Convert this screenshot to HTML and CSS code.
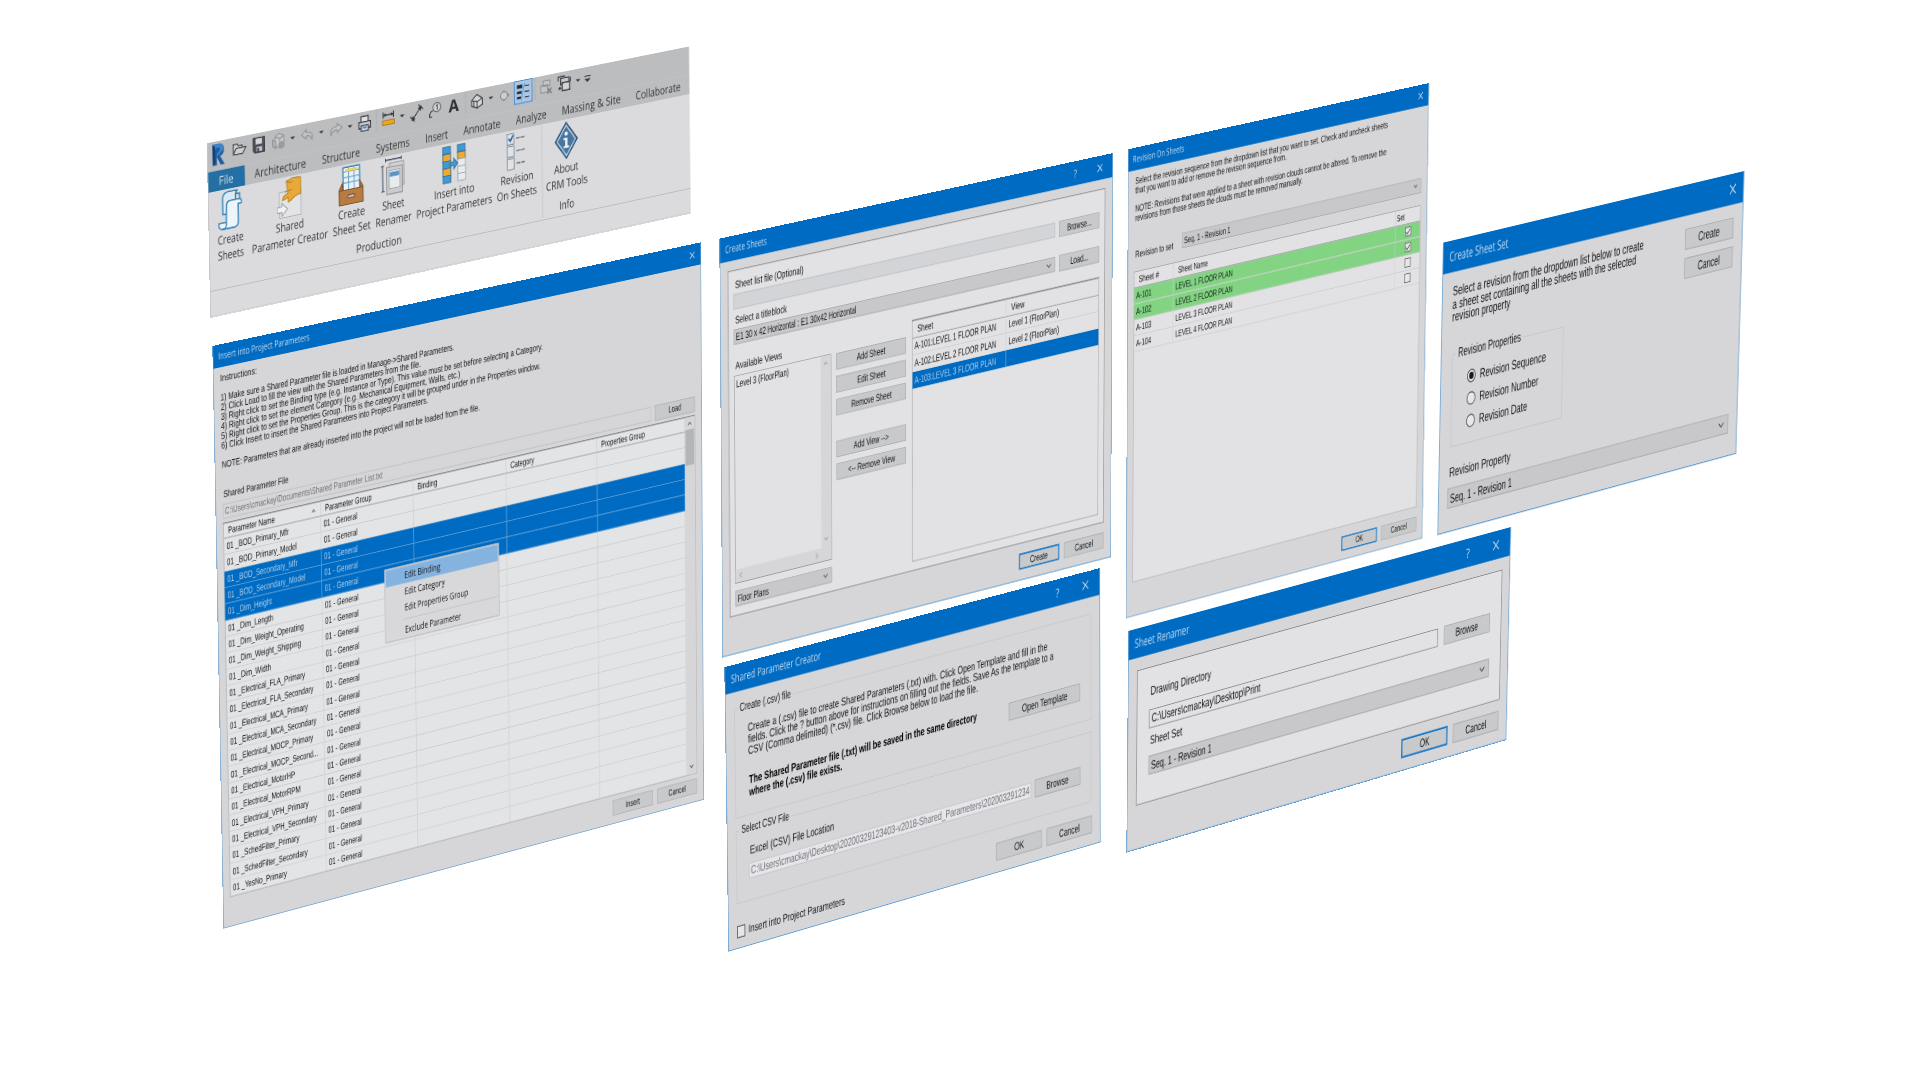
FILE: index.html
```html
<!DOCTYPE html>
<html lang="en">
<head>
<meta charset="utf-8">
<title>CRM Tools</title>
<link rel="stylesheet" href="styles.css">
</head>
<body>
<svg class="defs" width="0" height="0">
  <symbol id="x" viewBox="0 0 10 10"><path d="M.7.7l8.6 8.6M9.3.7L.7 9.3" fill="none" stroke="currentColor" stroke-width="1.1"/></symbol>
  <symbol id="down" viewBox="0 0 9 6"><path d="M.8.8l3.7 3.9L8.200.8" fill="none" stroke="currentColor" stroke-width="1.3"/></symbol>
  <symbol id="dd" viewBox="0 0 6 4"><path d="M0 .5h6L3 3.600z" fill="#3a3a3c"/></symbol>
</svg>

<main class="stage">

<section class="plane ribbon" data-quad="206.7,143.3,689,46.5,690.7,213.3,210.3,317.7">
  <div class="qat">
    <i class="logo"><svg width="18" height="25" viewBox="0 0 18 25"><path d="M2 1h8q6 0 6 6.500t-5 7l5.500 9.500h-5L7 15v9H2z" fill="#1d5c9e"/><path d="M2 1h8q6 0 6 6.500L7 15v-3l4-4q0-3-2-3H7L2 9z" fill="#3f86c6"/><path d="M2 1l3 3v17l-3 3z" fill="#123f74"/></svg></i>
    <i><svg width="18" height="14" viewBox="0 0 18 14"><path d="M1.500 12V1.500h4.500l1.500 2h5V6M1.500 12l3.500-6h12l-4 6.500H1.500z" fill="#cfd0d2" stroke="#3f4146" stroke-width="1.200"/></svg></i>
    <i><svg width="16" height="18" viewBox="0 0 16 18"><path d="M1 1h14v16H3l-2-2z" fill="#4a4f5a" stroke="#30343c"/><path d="M4 2h8v6H4z" fill="#d4d5d8"/><path d="M5 11h7v5H5z" fill="#c4c6ca"/><path d="M6 12h2v4H6z" fill="#30343c"/></svg></i>
    <i><svg width="17" height="19" viewBox="0 0 17 19"><path d="M4 4l5-3 6 3v9l-5 4-6-3zM4 4l6 3 5-3M10 7v10" fill="#c9cacb" stroke="#8e9092"/><path d="M1 7l4 2v8l-4-3z" fill="#b0b1b3" stroke="#8e9092"/><circle cx="12" cy="14" r="4" fill="#9a9c9e"/></svg></i>
    <b><svg width="6" height="4"><use href="#dd"/></svg></b>
    <i><svg width="17" height="14" viewBox="0 0 17 14"><path d="M7 1L1 6l6 5V8q6-1 7 5 3-9-7-9z" fill="#c3c4c5" stroke="#8b8d90"/></svg></i>
    <b><svg width="6" height="4"><use href="#dd"/></svg></b>
    <i><svg width="17" height="14" viewBox="0 0 17 14"><path d="M10 1l6 5-6 5V8q-6-1-8 5-2-9 8-9z" fill="#c3c4c5" stroke="#8b8d90"/></svg></i>
    <b><svg width="6" height="4"><use href="#dd"/></svg></b>
    <i><svg width="17" height="18" viewBox="0 0 17 18"><path d="M4 7V1h9v6" fill="#dfe0e2" stroke="#35383d" stroke-width="1.300"/><path d="M1 7h15v7H1z" fill="#c6c8cb" stroke="#35383d" stroke-width="1.300"/><path d="M4 11h9v6H4z" fill="#e6e6e8" stroke="#35383d" stroke-width="1.300"/><path d="M6 12.500h5v2H6z" fill="#3b80bd"/></svg></i>
    <u></u>
    <i><svg width="17" height="16" viewBox="0 0 17 16"><path d="M2 3.500h13M2 0v7M15 0v7" stroke="#35383d" stroke-width="1.300"/><path d="M2 3.500l3-2v4zM15 3.500l-3-2v4z" fill="#35383d"/><path d="M1 9.500h15v5H1z" fill="#e9a921" stroke="#a8781a"/></svg></i>
    <b><svg width="6" height="4"><use href="#dd"/></svg></b>
    <i><svg width="17" height="19" viewBox="0 0 17 19"><path d="M3 16L14 3M0 12l6 6M11 0l6 6" stroke="#35383d" stroke-width="1.200"/><path d="M2 17l1-5.500 4 4zM15 2l-1 5.500-4-4z" fill="#35383d"/></svg></i>
    <i><svg width="16" height="17" viewBox="0 0 16 17"><circle cx="10.500" cy="6" r="5" fill="#d2d3d5" stroke="#55585c" stroke-width="1.100"/><path d="M9.500 4.500l1.300-1v5.500M1 15q0-5 4.500-6M1 12v4h3" fill="none" stroke="#35383d" stroke-width="1.100"/></svg></i>
    <i class="glyph-a">A</i>
    <u></u>
    <i><svg width="16" height="17" viewBox="0 0 16 17"><path d="M1 7l7-6 7 5v7l-7 3-7-3z" fill="#d6d7d9" stroke="#44474c" stroke-width="1.300"/><path d="M1 7l7 2 7-3M8 9v7M4 8v7" fill="none" stroke="#44474c" stroke-width="1.300"/></svg></i>
    <b><svg width="6" height="4"><use href="#dd"/></svg></b>
    <i><svg width="14" height="15" viewBox="0 0 14 15"><path d="M5 1l8 6.500-8 6.500z" fill="#808285"/><circle cx="6" cy="7.500" r="4.500" fill="#cdced0" stroke="#85878a" stroke-width="1.200"/></svg></i>
    <i class="thin"><svg width="18" height="19" viewBox="0 0 18 19"><path d="M1 1h7v4H1zM1 8h6v3H1zM1 14h5v2.500H1z" fill="#22262c"/><path d="M11 3h6M11 9.500h6M11 15.500h6" stroke="#3b4046" stroke-width="1.200"/><path d="M11 0L6 19" stroke="#4e94da" stroke-width="1"/></svg></i>
    <u></u>
    <i><svg width="17" height="17" viewBox="0 0 17 17"><path d="M4 1h9v6H4zM1 6h9v8H1z" fill="#c3c4c6" stroke="#8d8f92" stroke-width="1.100"/><path d="M10 10l5 6M15 10l-5 6" stroke="#77797c" stroke-width="1.500"/></svg></i>
    <i><svg width="18" height="19" viewBox="0 0 18 19"><path d="M1 6V1h9M17 3v5" fill="none" stroke="#35383d" stroke-width="1.300"/><path d="M4 3h11v7H4z" fill="#c6c7c9" stroke="#35383d" stroke-width="1.300"/><path d="M6 8h10v9H6z" fill="#d4d5d7" stroke="#35383d" stroke-width="1.400"/><path d="M1 14h4M3 12v4" stroke="#35383d" stroke-width="1.300"/></svg></i>
    <b><svg width="6" height="4"><use href="#dd"/></svg></b>
    <b><svg width="9" height="9" viewBox="0 0 9 9"><path d="M0 1h9" stroke="#3a3a3c" stroke-width="1.200"/><path d="M.5 4h8l-4 4z" fill="#3a3a3c"/></svg></b>
  </div>
  <nav class="tabs">
    <span class="file"><span data-w="18">File</span></span><span data-w="64">Architecture</span><span data-w="48">Structure</span><span data-w="43">Systems</span><span data-w="29">Insert</span><span data-w="48">Annotate</span><span data-w="40">Analyze</span><span data-w="78">Massing &amp; Site</span><span data-w="60">Collaborate</span>
  </nav>
  <div class="panels">
    <div class="panel">
      <div class="tools">
        <div class="tool t1"><svg width="30" height="43" viewBox="0 0 30 43"><path d="M8 3q1-2 4-2h13q-3 1-3 4v20H6V8q0-3 2-5z" fill="#dbeaf4" stroke="#2d7fb5" stroke-width="1.500"/><path d="M11 14q1-3 4-3h12q3 1 2 5h-4v18q0 7-5 7H5q-5-1-4-7h9z" fill="#eef5fa" stroke="#2d7fb5" stroke-width="1.500"/><path d="M10 34q1 6-4 7M22 5h5v6" fill="none" stroke="#2d7fb5" stroke-width="1.500"/></svg><span data-w="32">Create</span><span data-w="32">Sheets</span></div>
        <div class="tool t2"><svg width="31" height="43" viewBox="0 0 31 43"><path d="M3 14h27v28H3z" fill="#e3e4e6" stroke="#aeb0b3"/><path d="M12 3l9-3 9 1v18l-8 2-5 4-3 1v-5l-7 2 1-4 6-3z" fill="#e6a93a" stroke="#b47c1e"/><path d="M12 3q5 3 8 1M10 14l9-1" stroke="#b47c1e" fill="none"/><path d="M0 30h6v-4l7 7-7 7v-4H0z" fill="#f2f2f4" stroke="#9a9c9f"/></svg><span data-w="35">Shared</span><span data-w="95">Parameter Creator</span></div>
        <div class="tool t3"><svg width="32" height="43" viewBox="0 0 32 43"><path d="M6 1h21v28H6z" fill="#e9f2f8" stroke="#2f78ab" stroke-width="1.400"/><path d="M6 6h21M6 12h21M6 18h21M13 1v26M20 1v26" stroke="#6ba3c9" stroke-width="1.200"/><path d="M9 3h15v3H9z" fill="#f0d060"/><path d="M5 18L1 25v17h30V25l-4-7v9H5z" fill="#a8713c" stroke="#7c4f24"/><path d="M1 26h30v16H1z" fill="#b67c43" stroke="#7c4f24"/><path d="M12 32h8v3h-8z" fill="#e1e1e1" stroke="#6f4520"/></svg><span data-w="34">Create</span><span data-w="48">Sheet Set</span></div>
        <div class="tool t4"><svg width="31" height="42" viewBox="0 0 31 42"><path d="M6 2h20M6 0v4M26 0v4M2 8v28M0 8h4M0 36h4" stroke="#3d4f66" stroke-width="1.200"/><path d="M11 6h18v26H11z" fill="#d5d7d9" stroke="#8c9094"/><path d="M7 10h20v30H7z" fill="#c9cbce" stroke="#8c9094"/><path d="M10 14h14v20H10z" fill="#e9eaec" stroke="#a4a7aa"/><path d="M11 16h12v5H11z" fill="#5a93c2"/></svg><span data-w="28">Sheet</span><span data-w="46">Renamer</span></div>
        <div class="tool t5"><svg width="31" height="42" viewBox="0 0 31 42"><g stroke="#3f6f93" stroke-width="1"><path d="M1 1h10v8H1zM1 17h10v8H1zM1 33h10v8H1zM20 1h10v8H20z" fill="#3f9ad6"/><path d="M1 9h10v8H1zM1 25h10v8H1zM20 9h10v8H20z" fill="#eeab2d"/><path d="M20 17h10v8H20zM20 25h10v8H20zM20 33h10v8H20z" fill="#e8ecef" stroke="#9aa4ac"/><path d="M10 19h5v-4l5 6-5 6v-4h-5z" fill="#3f9ad6"/></g></svg><span data-w="52">Insert into</span><span data-w="98">Project Parameters</span></div>
        <div class="tool t6"><svg width="26" height="42" viewBox="0 0 26 42"><g fill="#dfe3e8" stroke="#7d8791"><path d="M1 1h9v12H1zM1 15h9v12H1zM1 29h9v12H1z"/></g><path d="M3 6l2.500 3L9 3" fill="none" stroke="#2b6cab" stroke-width="2"/><path d="M13 7h12M13 21h12M13 35h12" stroke="#6d747b" stroke-width="1.500" stroke-dasharray="5 1"/></svg><span data-w="43">Revision</span><span data-w="52">On Sheets</span></div>
      </div>
      <div class="caption"><span data-w="58">Production</span></div>
    </div>
    <div class="panel">
      <div class="tools">
        <div class="tool t7"><svg width="31" height="42" viewBox="0 0 31 42"><path d="M15.500 1L30 21 15.500 41 1 21z" fill="#48769f" stroke="#2d567c" stroke-width="1.500"/><path d="M15.500 4L27.500 21l-12 17-12-17z" fill="none" stroke="#cfd9e2" stroke-width="1.300"/><circle cx="15.500" cy="13.500" r="2.300" fill="#f1f3f5"/><path d="M12 18h5v9h2v2.500h-7V27h2v-6.500h-2z" fill="#f1f3f5"/></svg><span data-w="32">About</span><span data-w="55">CRM Tools</span></div>
      </div>
      <div class="caption"><span data-w="20">Info</span></div>
    </div>
  </div>
  <div class="under"></div>
</section>

<section class="plane dialog insert" data-quad="212.3,346,701,242.3,704,799.7,223.3,928.7">
  <header><span data-w="166">Insert into Project Parameters</span><svg class="close" width="11" height="11"><use href="#x"/></svg></header>
  <div class="body">
    <div class="para">
      <p data-w="66">Instructions:</p><br>
      <p data-w="430">1) Make sure a Shared Parameter file is loaded in Manage-&gt;Shared Parameters.</p>
      <p data-w="367">2) Click Load to fill the view with the Shared Parameters from the file.</p>
      <p data-w="598">3) Right click to set the Binding type (e.g. Instance or Type). This value must be set before selecting a Category.</p>
      <p data-w="441">4) Right click to set the element Category (e.g. Mechanical Equipment, Walls, etc.)</p>
      <p data-w="593">5) Right click to set the Properties Group. This is the category it will be grouped under in the Properties window.</p>
      <p data-w="380">6) Click Insert to insert the Shared Parameters into Project Parameters.</p><br>
      <p data-w="477">NOTE: Parameters that are already inserted into the project will not be loaded from the file.</p>
    </div>
    <div class="lbl"><span data-w="118">Shared Parameter File</span></div>
    <div class="filerow"><div class="field"><span data-w="289">C:\Users\cmackay\Documents\Shared Parameter List.txt</span></div><button><span>Load</span></button></div>
    <div class="listwrap">
      <div class="grid" id="params"></div>
      <div class="vbar"><svg width="9" height="6" class="flip"><use href="#down"/></svg><div class="thumb"></div><svg width="9" height="6"><use href="#down"/></svg></div>
    </div>
    <div class="actions"><button><span>Insert</span></button><button><span>Cancel</span></button></div>
  </div>
  <div class="menu"><div class="on"><span data-w="68">Edit Binding</span></div><div><span data-w="76">Edit Category</span></div><div><span data-w="120">Edit Properties Group</span></div><hr><div><span data-w="106">Exclude Parameter</span></div></div>
</section>

<section class="plane dialog sheets" data-quad="719.3,238.7,1113,153,1110.7,557,722.3,657.3">
  <header><span data-w="74">Create Sheets</span><em>?</em><svg class="close" width="11" height="11"><use href="#x"/></svg></header>
  <div class="body">
    <div class="box">
      <div class="lbl"><span data-w="122">Sheet list file (Optional)</span></div>
      <div class="filerow"><div class="field"></div><button><span>Browse...</span></button></div>
      <div class="lbl l2"><span data-w="92">Select a titleblock</span></div>
      <div class="filerow"><div class="combo"><span data-w="216">E1 30 x 42 Horizontal : E1 30x42 Horizontal</span><svg width="9" height="6"><use href="#down"/></svg></div><button><span>Load...</span></button></div>
      <div class="cols">
        <div class="views">
          <div class="lbl"><span data-w="83">Available Views</span></div>
          <div class="listbox">
            <div class="items"><span data-w="94">Level 3 (FloorPlan)</span></div>
            <div class="vs"><svg width="8" height="5" class="flip"><use href="#down"/></svg><svg width="8" height="5"><use href="#down"/></svg></div>
            <div class="hs"><svg width="8" height="5" class="left"><use href="#down"/></svg><svg width="8" height="5" class="right"><use href="#down"/></svg></div>
          </div>
          <div class="combo"><span data-w="56">Floor Plans</span><svg width="9" height="6"><use href="#down"/></svg></div>
        </div>
        <div class="btns"><button><span>Add Sheet</span></button><button><span>Edit Sheet</span></button><button><span>Remove Sheet</span></button><button class="sp"><span>Add View --&gt;</span></button><button><span>&lt;-- Remove View</span></button></div>
        <div class="tbl">
          <div class="r h"><span><span data-w="29">Sheet</span></span><span><span data-w="25">View</span></span></div>
          <div class="r"><span><span data-w="151">A-101:LEVEL 1 FLOOR PLAN</span></span><span><span data-w="95">Level 1 (FloorPlan)</span></span></div>
          <div class="r"><span><span data-w="151">A-102:LEVEL 2 FLOOR PLAN</span></span><span><span data-w="95">Level 2 (FloorPlan)</span></span></div>
          <div class="r sel"><span><span data-w="151">A-103:LEVEL 3 FLOOR PLAN</span></span><span></span></div>
        </div>
      </div>
    </div>
    <div class="actions"><button class="def"><span>Create</span></button><button><span>Cancel</span></button></div>
  </div>
</section>

<section class="plane dialog creator" data-quad="724.3,667.3,1100,568,1100.7,842.3,728.3,951.7">
  <header><span data-w="141">Shared Parameter Creator</span><em>?</em><svg class="close" width="11" height="11"><use href="#x"/></svg></header>
  <div class="body">
    <fieldset class="g1"><legend><span data-w="80">Create (.csv) file</span></legend>
      <div class="para">
        <p data-w="483">Create a (.csv) file to create Shared Parameters (.txt) with. Click Open Template and fill in the</p>
        <p data-w="493">fields. Click the ? button above for instructions on filling out the fields. Save As the template to a</p>
        <p data-w="368">CSV (Comma delimited) (*.csv) file. Click Browse below to load the file.</p>
      </div>
      <div class="split">
        <div class="para strong"><p data-w="365">The Shared Parameter file (.txt) will be saved in the same directory</p><p data-w="147">where the (.csv) file exists.</p></div>
        <button><span>Open Template</span></button>
      </div>
    </fieldset>
    <fieldset class="g2"><legend><span data-w="75">Select CSV File</span></legend>
      <div class="lbl"><span data-w="133">Excel (CSV) File Location</span></div>
      <div class="filerow"><div class="field"><span data-w="450">C:\Users\cmackay\Desktop\20200329123403-v2018-Shared_Parameters\202003291234</span></div><button><span>Browse</span></button></div>
    </fieldset>
    <div class="foot"><label><i class="chk"></i><span data-w="153">Insert into Project Parameters</span></label><button><span>OK</span></button><button><span>Cancel</span></button></div>
  </div>
</section>

<section class="plane dialog revision" data-quad="1128,149.3,1429,83,1422.3,538.3,1125.7,618.3">
  <header><span data-w="104">Revision On Sheets</span><svg class="close" width="11" height="11"><use href="#x"/></svg></header>
  <div class="body">
    <div class="para">
      <p data-w="523">Select the revision sequence from the dropdown list that you want to set. Check and uncheck sheets</p>
      <p data-w="310">that you want to add or remove the revision sequence from.</p><br>
      <p data-w="521">NOTE: Revisions that were applied to a sheet with revision clouds cannot be altered. To remove the</p>
      <p data-w="344">revisions from those sheets the clouds must be removed manually.</p>
    </div>
    <div class="pick"><span class="w"><span data-w="77">Revision to set</span></span><div class="combo"><span data-w="95">Seq. 1 - Revision 1</span><svg width="9" height="6"><use href="#down"/></svg></div></div>
    <div class="tbl">
      <div class="r h"><span><span data-w="41">Sheet #</span></span><span><span data-w="61">Sheet Name</span></span><span><span data-w="17">Set</span></span></div>
      <div class="r ok"><span><span data-w="31">A-101</span></span><span><span data-w="117">LEVEL 1 FLOOR PLAN</span></span><span><i class="chk on"></i></span></div>
      <div class="r ok"><span><span data-w="31">A-102</span></span><span><span data-w="117">LEVEL 2 FLOOR PLAN</span></span><span><i class="chk on"></i></span></div>
      <div class="r"><span><span data-w="31">A-103</span></span><span><span data-w="117">LEVEL 3 FLOOR PLAN</span></span><span><i class="chk"></i></span></div>
      <div class="r"><span><span data-w="31">A-104</span></span><span><span data-w="117">LEVEL 4 FLOOR PLAN</span></span><span><i class="chk"></i></span></div>
    </div>
    <div class="actions"><button class="def"><span>OK</span></button><button><span>Cancel</span></button></div>
  </div>
</section>

<section class="plane dialog set" data-quad="1443,242.7,1744.3,171,1736,453.7,1437.3,535">
  <header><span data-w="88">Create Sheet Set</span><svg class="close" width="11" height="11"><use href="#x"/></svg></header>
  <div class="body">
    <div class="top">
      <div class="para">
        <p data-w="290">Select a revision from the dropdown list below to create</p>
        <p data-w="279">a sheet set containing all the sheets with the selected</p>
        <p data-w="87">revision property</p>
      </div>
      <div class="stack"><button><span>Create</span></button><button><span>Cancel</span></button></div>
    </div>
    <fieldset><legend><span data-w="94">Revision Properties</span></legend>
      <label><i class="rad on"></i><span data-w="100">Revision Sequence</span></label>
      <label><i class="rad"></i><span data-w="89">Revision Number</span></label>
      <label><i class="rad"></i><span data-w="73">Revision Date</span></label>
    </fieldset>
    <div class="lbl"><span data-w="92">Revision Property</span></div>
    <div class="combo"><span data-w="93">Seq. 1 - Revision 1</span><svg width="9" height="6"><use href="#down"/></svg></div>
  </div>
</section>

<section class="plane dialog renamer" data-quad="1128.3,631,1511,527,1506.3,740,1126.3,852.7">
  <header><span data-w="84">Sheet Renamer</span><em>?</em><svg class="close" width="11" height="11"><use href="#x"/></svg></header>
  <div class="body">
    <div class="box">
      <div class="lbl"><span data-w="94">Drawing Directory</span></div>
      <div class="filerow"><div class="field"><span data-w="170">C:\Users\cmackay\Desktop\Print</span></div><button><span>Browse</span></button></div>
      <div class="lbl l2"><span data-w="50">Sheet Set</span></div>
      <div class="combo"><span data-w="94">Seq. 1 - Revision 1</span><svg width="9" height="6"><use href="#down"/></svg></div>
    </div>
    <div class="actions"><button class="def"><span>OK</span></button><button><span>Cancel</span></button></div>
  </div>
</section>

</main>
<script src="planes.js"></script>
</body>
</html>
```
FILE: styles.css
```css
* { box-sizing: border-box; }
body { margin: 0; background: #fff; }
.defs { position: absolute; }
.stage { position: relative; width: 1920px; height: 1080px; overflow: hidden; }
p { margin: 0; }
[data-w] { display: inline-block; white-space: nowrap; transform-origin: 0 50%; }

/* Windows hang in space; planes.js gives each its perspective */
.tilt { position: absolute; left: 0; top: 0; transform-origin: 0 0; }
.plane { position: relative; transform-origin: 0 0; display: flex; flex-direction: column; overflow: hidden; }

/* Ribbon */
.ribbon { width: 620px; height: 190px; background: #dbdbdd; color: #333437; font: 13px/17px "Open Sans", "Noto Sans", sans-serif; border-left: 1px solid #c4c5c6; border-bottom: 1px solid #c4c5c6; }
.qat { display: flex; height: 32px; background: #bcbdbe; margin-left: -1px; align-items: flex-start; }
.qat > * { display: flex; align-items: center; justify-content: center; height: 26px; flex: none; }
.qat > i { width: 24px; }
.qat > i.logo { width: 28px; height: 28px; justify-content: flex-start; padding-left: 5px; }
.qat > b { width: 12px; }
.qat > u { width: 6px; }
.qat > u::after { content: ""; width: 1px; height: 24px; background: #adaeaf; }
.qat > .thin { border: 1.500px solid #3f86cd; background: #a9c6e4; }
.glyph-a { font: bold 19px/26px "Open Sans", sans-serif; color: #2e3034; }
.tabs { display: flex; height: 22px; background: #bcbdbe; gap: 20px; line-height: 22px; margin-left: -1px; }
.file { width: 46px; margin-right: -8px; background: #2470a5; color: #d8e4ee; text-align: center; }
.panels { display: flex; height: 108px; border-bottom: 1px solid #b9babb; }
.panel { display: flex; flex-direction: column; border-right: 1px solid #c6c7c8; margin: 2px 0; }
.panel:last-child { border: 0; }
.tools { display: flex; padding-left: 3px; height: 84px; }
.panel:last-child .tools { padding: 0; }
.tool { display: flex; flex-direction: column; align-items: center; white-space: nowrap; }
.tool svg { height: 43px; margin-bottom: 1px; flex: none; }
.t1 { width: 46px; } .t2 { width: 101px; } .t3 { width: 54px; } .t4 { width: 52px; } .t5 { width: 104px; } .t6 { width: 62px; padding-right: 4px; } .t7 { width: 62px; }
.caption { text-align: center; padding-top: 1px; }

/* Dialogs */
.dialog { background: #d6d6d8; color: #161618; font: 13px/13px "Liberation Sans", Arial, sans-serif; border: 1px solid #5c9dd3; border-top: 0; }
.dialog header { display: flex; align-items: center; flex: none; height: 31px; margin: 0 -1px; padding: 0 12px 0 10px; background: #006bc2; color: #cfe0f1; font: 13px/31px "Open Sans", "Noto Sans", sans-serif; }
.dialog header em { font-style: normal; font-size: 14px; margin-left: auto; margin-right: 38px; }
.dialog header .close { margin-left: auto; }
.dialog header em + .close { margin-left: 0; margin-right: 7px; }
.body { display: flex; flex-direction: column; flex: 1; }
.para { white-space: nowrap; }
.para p { display: block; width: max-content; }
.lbl { height: 14px; line-height: 14px; white-space: nowrap; }
button { font: inherit; color: inherit; padding: 0; margin: 0; height: 21px; width: 76px; flex: none; border: 1px solid #acadaf; background: #c8c9cb; border-radius: 0; line-height: 18px; white-space: nowrap; }
button span, .narrow { display: inline-block; transform: scaleX(.86); }
.narrow { transform-origin: 0 50%; }
button.def { border: 2px solid #1d7ac8; line-height: 16px; }
.field, .combo { display: flex; align-items: center; border: 1px solid #bfc0c2; padding: 0 3px; white-space: nowrap; }
.combo { background: #c8c8ca; border-color: #acadaf; height: 20px; padding-right: 6px; }
.combo svg { margin-left: auto; color: #55575a; flex: none; }
.filerow { display: flex; align-items: center; justify-content: space-between; }
.actions { display: flex; justify-content: flex-end; gap: 9px; }
.flip { transform: scaleY(-1); } .left { transform: rotate(90deg); } .right { transform: rotate(-90deg); }
.box { background: #e2e2e4; border: 1.500px solid #858688; }
.chk { display: block; width: 13px; height: 13px; border: 1.200px solid #3c3c3e; background: #e6e6e8; flex: none; }
.chk.on::after { content: ""; display: block; width: 8px; height: 4px; border: solid #2b2b2d; border-width: 0 0 1.500px 1.500px; transform: translate(1px, 2px) rotate(-48deg); }
.rad { width: 13px; height: 13px; border-radius: 50%; border: 1.200px solid #444547; background: #e8e8ea; flex: none; display: flex; align-items: center; justify-content: center; }
.rad.on::after { content: ""; width: 7px; height: 7px; border-radius: 50%; background: #1a1a1a; }
fieldset { margin: 0; min-width: 0; border: 1px solid #c6c7c9; padding: 0; }
legend { padding: 0 3px; height: 14px; line-height: 14px; margin-left: 5px; white-space: nowrap; }

/* Insert into Project Parameters */
.insert { width: 920px; height: 796px; }
.insert .body { padding: 8px 13px 0 12px; }
.insert .lbl { margin: 27px 0 4px 2px; }
.insert .filerow { height: 23px; }
.insert .field { width: 807px; height: 20px; color: #6c6d70; }
.insert .filerow button, .insert .actions button { width: 79px; height: 22px; }
.listwrap { display: flex; height: 514px; margin-top: 4px; border: 1px solid #9fa0a4; border-top: 2px solid #8c8d92; background: #e3e4e6; }
.grid { flex: 1; display: grid; grid-template-columns: 177px 172px 176px 175px 1fr; grid-template-rows: 20px repeat(22, 1fr); }
.grid > span { display: flex; align-items: center; padding: 0 0 0 5px; white-space: nowrap; border-right: 1px solid #cbccce; border-bottom: 1px solid #cbccce; min-height: 0; min-width: 0; }
.grid > span.h { padding: 0 8px; border-bottom-color: #9a9b9e; justify-content: space-between; }
.grid > span.s { background: #006bc2; color: #b9d3ec; border-color: #8bb9e2; }
.vbar { width: 19px; background: #d6d6d8; display: flex; flex-direction: column; align-items: center; padding: 6px 0 8px; color: #4c4d50; }
.vbar .thumb { width: 17px; height: 51px; margin: 5px 0 auto; background: #b4b5b7; }
.insert .actions { margin-top: 7px; }
.menu { position: absolute; left: 306px; top: 357px; width: 216px; height: 102px; background: #d8d8da; border: 1px solid #b4b5b8; padding: 1px; font: 13px/22px "Open Sans", "Noto Sans", sans-serif; white-space: nowrap; }
.menu div { padding-left: 35px; height: 22px; }
.menu .on { background: #84b3df; height: 23px; line-height: 23px; }
.menu hr { border: 0; height: 1px; background: #c2c3c5; margin: 5px 1px 3px 32px; }

/* Create Sheets */
.sheets { width: 720px; height: 526px; }
.sheets .body { padding: 12px 13px 0; }
.sheets .box { height: 435px; padding: 11px 10px 0 9px; }
.sheets .lbl { padding-left: 3px; }
.sheets .filerow { height: 21px; margin-top: 3px; }
.sheets .l2 { margin-top: 6px; }
.sheets .filerow .field, .sheets .filerow .combo { width: 587px; height: 19px; }
.sheets .filerow .field { background: #d3d4d7; }
.cols { display: flex; margin-top: 19px; align-items: flex-start; }
.views { width: 174px; margin-right: 9px; }
.listbox { height: 262px; margin: 5px 0 9px; border: 1px solid #98999c; display: grid; grid-template: 1fr 17px / 1fr 18px; }
.items { padding: 3px; white-space: nowrap; }
.vs, .hs { display: flex; justify-content: space-between; align-items: center; background: #d6d6d8; color: #96979a; }
.vs { flex-direction: column; padding: 7px 0 8px; }
.hs { grid-column: 1 / 3; padding: 0 22px 0 5px; }
.btns { display: flex; flex-direction: column; gap: 8px; margin: 20px 11px 0 0; }
.btns button { width: 127px; }
.btns .sp { margin-top: 24px; }
.sheets .tbl { flex: 1; height: 310px; border: 1px solid #a9aaae; border-top: 2px solid #8c8d92; }
.r { display: grid; white-space: nowrap; }
.r > span { display: flex; align-items: center; border-right: 1px solid #cfd0d2; border-bottom: 1px solid #cfd0d2; padding-left: 4px; min-width: 0; }
.sheets .r { grid-template-columns: 174px 1fr; height: 21.500px; }
.sheets .r > span:last-child { border-right: 0; }
.r.h > span { padding-left: 9px; border-bottom-color: #9a9b9e; }
.sheets .r.sel { background: #006bc2; color: #b9d3ec; }
.sheets .r.sel > span { border-bottom: 0; border-color: #8bb9e2; }
.sheets .actions { margin-top: 13px; padding-right: 0; }

/* Shared Parameter Creator */
.creator { width: 606px; height: 322px; }
.creator .body { padding: 12px 14px 0 13px; }
.g1 { height: 131px; }
.g1 .para { margin: 11px 0 0 20px; }
.split { display: flex; justify-content: space-between; align-items: flex-start; padding: 20px 18px 0 0; }
.split .para { margin: 0 0 0 21px; line-height: 14px; font-weight: bold; color: #000; }
.split button { width: 119px; margin: 1px 0 0 -60px; }
.g2 { height: 90px; margin-top: 7px; }
.g2 .lbl { margin: 12px 0 5px 21px; }
.g2 .filerow { padding: 0 18px 0 19px; }
.g2 .field { width: 456px; height: 18px; background: #e6e6ea; color: #6c6d70; padding: 0 2px; }
.foot { display: flex; gap: 8px; margin-top: 16px; }
.foot label { display: flex; gap: 5px; align-items: center; margin-right: auto; height: 29px; padding-top: 2px; white-space: nowrap; }
.foot .chk { height: 14px; }

/* Revision On Sheets */
.revision { width: 625px; height: 650px; }
.revision .body { padding: 9px 13px 0 12px; }
.revision .para { line-height: 12.700px; padding-left: 2px; }
.pick { display: flex; align-items: flex-end; justify-content: space-between; margin-top: 28px; }
.pick .w { padding-left: 3px; }
.pick .combo { width: 500px; height: 21px; }
.revision .tbl { height: 432px; margin-top: 17px; border: 1px solid #a9aaae; background: #e2e2e4; }
.revision .r { grid-template-columns: 80px 464px 1fr; height: 22px; }
.revision .r > span:last-child { border-right: 0; justify-content: center; padding: 0; }
.revision .r.h > span:last-child { justify-content: flex-start; padding-left: 2px; border-left: 0; }
.revision .r.ok { background: #82d483; }
.revision .actions { margin-top: 14px; }

/* Create Sheet Set */
.set { width: 462px; height: 285px; }
.set .body { padding: 13px 13px 0; }
.top { display: flex; justify-content: space-between; align-items: flex-start; height: 60px; }
.top .para { padding-left: 2px; line-height: 12.700px; }
.stack { display: flex; flex-direction: column; gap: 8px; padding-right: 1px; }
.set fieldset { width: 168px; height: 98px; margin-left: 3px; }
.set fieldset label { display: flex; align-items: center; gap: 6px; height: 22px; padding-left: 22px; white-space: nowrap; }
.set fieldset legend + label { margin-top: 7px; }
.set .body > .lbl { margin: 18px 0 8px 2px; }

/* Sheet Renamer */
.renamer { width: 611px; height: 234px; }
.renamer .body { padding: 13px 12px 0 13px; }
.renamer .box { height: 143px; padding: 18px 18px 0 18px; }
.renamer .lbl { padding-left: 2px; margin-bottom: 11px; }
.renamer .l2 { margin: 6px 0 9px; }
.renamer .field { width: 460px; height: 20px; border-color: #8b8c8f; }
.renamer .actions { margin-top: 12px; padding-right: 1px; }
```
FILE: planes.js
```js
const names = [
  "BOD_Primary_Mfr", "BOD_Primary_Model", "BOD_Secondary_Mfr", "BOD_Secondary_Model",
  "Dim_Height", "Dim_Length", "Dim_Weight_Operating", "Dim_Weight_Shipping", "Dim_Width",
  "Electrical_FLA_Primary", "Electrical_FLA_Secondary", "Electrical_MCA_Primary",
  "Electrical_MCA_Secondary", "Electrical_MOCP_Primary", "Electrical_MOCP_Second...",
  "Electrical_MotorHP", "Electrical_MotorRPM", "Electrical_VPH_Primary",
  "Electrical_VPH_Secondary", "SchedFilter_Primary", "SchedFilter_Secondary", "YesNo_Primary"
];
const grid = document.getElementById("params");
const cell = (text, cls) => {
  const s = document.createElement("span");
  if (cls) s.className = cls;
  if (text) {
    const t = document.createElement("span");
    t.className = "narrow";
    t.textContent = text;
    s.append(t);
  }
  grid.append(s);
  return s;
};
const first = cell("Parameter Name", "h");
first.insertAdjacentHTML("beforeend", '<svg width="8" height="5"><path d="M0 5l4-5 4 5z" fill="#8d8e91"/></svg>');
["Parameter Group", "Binding", "Category", "Properties Group"].forEach(t => cell(t, "h"));
names.forEach((n, i) => {
  const c = i > 1 && i < 5 ? "s" : "";
  ["01 _" + n, "01 - General", "", "", ""].forEach(t => cell(t, c));
});

// Condense each marked line to its intended width; all are measured before any is changed
const lines = [...document.querySelectorAll("[data-w]")]
  .map(el => [el, el.getBoundingClientRect().width]);
for (const [el, natural] of lines) {
  el.style.transform = `scaleX(${el.dataset.w / natural})`;
  el.style.marginRight = el.dataset.w - natural + "px";
}

// Map every window's rectangle on to its four screen corners.
// The content is first scaled flat to about its final size, so the
// perspective step neither shrinks nor stretches the drawn pixels much.
const DETAIL = 1.15;
document.querySelectorAll("[data-quad]").forEach(el => {
  const [x0, y0, x1, y1, x2, y2, x3, y3] = el.dataset.quad.split(",").map(Number);
  const sw = (x1 - x0) * DETAIL / el.offsetWidth, sh = (y3 - y0) * DETAIL / el.offsetHeight;
  const w = el.offsetWidth * sw, h = el.offsetHeight * sh;
  const ax = x1 - x2, bx = x3 - x2, sx = x0 - x1 + x2 - x3;
  const ay = y1 - y2, by = y3 - y2, sy = y0 - y1 + y2 - y3;
  const d = ax * by - bx * ay, g = (sx * by - bx * sy) / d, k = (ax * sy - sx * ay) / d;
  const tilt = document.createElement("div");
  tilt.className = "tilt";
  el.replaceWith(tilt);
  tilt.append(el);
  el.style.transform = `scale(${sw}, ${sh})`;
  tilt.style.transform = `matrix3d(${[
    (x1 - x0 + g * x1) / w, (y1 - y0 + g * y1) / w, 0, g / w,
    (x3 - x0 + k * x3) / h, (y3 - y0 + k * y3) / h, 0, k / h,
    0, 0, 1, 0, x0, y0, 0, 1].join(",")})`;
});
```
